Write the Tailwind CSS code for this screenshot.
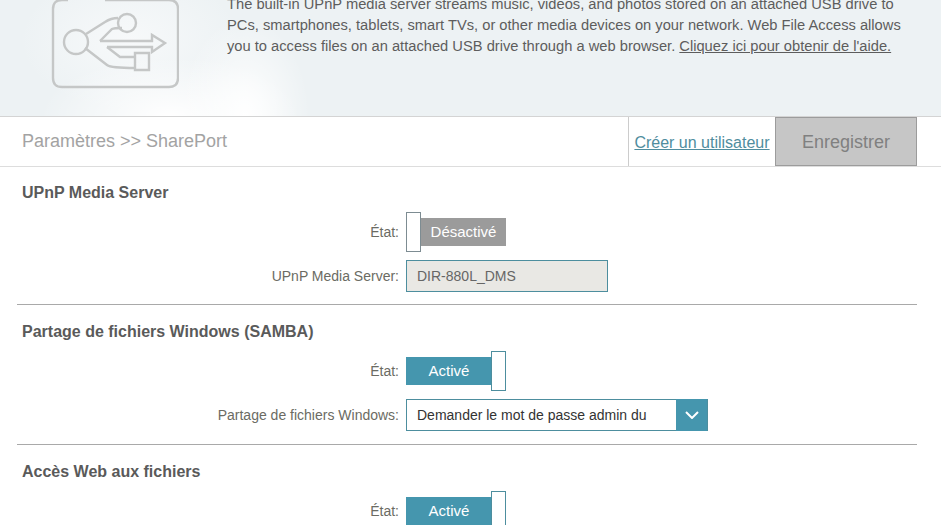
<!DOCTYPE html>
<html>
<head>
<meta charset="utf-8">
<script src="https://cdn.jsdelivr.net/npm/@tailwindcss/browser@4"></script>
</head>
<body class="h-[525px] w-[941px] overflow-hidden bg-white font-['Liberation_Sans',Arial,sans-serif]">

<!-- top banner -->
<div class="flex h-[117px] overflow-hidden border-b border-[#d4d4d4] bg-[#edf2f4] bg-[radial-gradient(ellipse_65px_100px_at_245px_117px,#ffffff_0%,#ffffff00_100%),radial-gradient(ellipse_130px_60px_at_170px_117px,#ffffff_0%,#ffffff00_100%),radial-gradient(ellipse_110px_70px_at_130px_40px,#f7f9fa_0%,#f7f9fa00_100%)]">
  <div class="ml-[51px] w-[128px] shrink-0">
    <svg width="128" height="90" viewBox="0 0 128 90" fill="none" stroke="#c5c7c7" stroke-width="2.4">
      <path d="M54 0H118Q127 0 127 9V78Q127 87 118 87H11Q2 87 2 78V9Q2 0 11 0H17"/>
      <circle cx="25" cy="42" r="12"/>
      <circle cx="76" cy="23" r="9"/>
      <path d="M35 34L54 22Q60 18 67 18"/>
      <path d="M49 41L61 29Q63 28 71 28"/>
      <path d="M49 41H101V35L114 43L101 52V47H56"/>
      <path d="M34 48L56 65Q60 68 84 68"/>
      <path d="M56 47L69 57H84"/>
      <path d="M84 53H98V70H84Z"/>
    </svg>
  </div>
  <p class="ml-[48px] mt-[-6px] w-[690px] text-[14.7px] leading-[21px] text-[#5d5d5d]">
    The built-in UPnP media server streams music, videos, and photos stored on an attached USB drive to
    PCs, smartphones, tablets, smart TVs, or other media devices on your network. Web File Access allows
    you to access files on an attached USB drive through a web browser. <u>Cliquez ici pour obtenir de l'aide.</u>
  </p>
</div>

<!-- title bar -->
<div class="flex h-[50px] items-center border-b border-[#dddddd] pl-[22px] pr-[24px]">
  <div class="flex-1 text-[18px] text-[#a3a3a3]">Paramètres &gt;&gt; SharePort</div>
  <div class="flex h-[49px] w-[147px] items-center justify-center border-l border-[#cccccc] pt-[2px] text-[16px] text-[#4f8d9e] underline">Créer un utilisateur</div>
  <div class="flex h-[49px] w-[142px] items-center justify-center border border-[#9c9c9c] bg-[#c6c6c6] pt-[2px] text-[18px] text-[#808080]">Enregistrer</div>
</div>

<!-- UPnP -->
<div class="mx-[17px] h-[138px] w-[900px] border-b border-[#a9a9a9]">
  <h2 class="pl-[5px] pt-[17px] text-[16px] font-bold leading-[17px] text-[#5a5a5a]">UPnP Media Server</h2>
  <div class="mt-[11px] flex h-[40px] items-center">
    <span class="w-[382px] text-right text-[14px] text-[#6b6b63]">État:</span>
    <div class="ml-[7px] flex h-[40px] items-center">
      <div class="h-[40px] w-[15px] border border-[#7d8c92] bg-white"></div>
      <div class="flex h-[28px] w-[85px] items-center justify-center bg-[#9b9b9b] text-[15px] text-white">Désactivé</div>
    </div>
  </div>
  <div class="mt-[8px] flex h-[32px] items-center">
    <span class="w-[382px] text-right text-[14px] text-[#6b6b63]">UPnP Media Server:</span>
    <div class="ml-[7px] flex h-[32px] w-[202px] items-center border border-[#4d8e9e] bg-[#e9e8e4] pl-[10px] text-[14px] text-[#666666]">DIR-880L_DMS</div>
  </div>
</div>

<!-- SAMBA -->
<div class="mx-[17px] h-[140px] w-[900px] border-b border-[#a9a9a9]">
  <h2 class="pl-[5px] pt-[18px] text-[16px] font-bold leading-[17px] text-[#5a5a5a]">Partage de fichiers Windows (SAMBA)</h2>
  <div class="mt-[11px] flex h-[40px] items-center">
    <span class="w-[382px] text-right text-[14px] text-[#6b6b63]">État:</span>
    <div class="ml-[7px] flex h-[40px] items-center">
      <div class="flex h-[28px] w-[86px] items-center justify-center bg-[#4596ae] text-[15px] text-white">Activé</div>
      <div class="ml-[-1px] h-[40px] w-[15px] border border-[#4d8e9e] bg-white"></div>
    </div>
  </div>
  <div class="mt-[8px] flex h-[32px] items-center">
    <span class="w-[382px] text-right text-[14px] text-[#6b6b63]">Partage de fichiers Windows:</span>
    <div class="ml-[7px] flex h-[32px] w-[302px] items-center justify-between border border-[#4d8e9e] bg-white pl-[10px] text-[14px] text-[#333333]">
      <span>Demander le mot de passe admin du</span>
      <div class="flex h-[32px] w-[31px] items-center justify-center bg-[#4596ae]">
        <svg width="14" height="8" viewBox="0 0 14 8" fill="none" stroke="#ffffff" stroke-width="2"><path d="M1 1L7 7L13 1"/></svg>
      </div>
    </div>
  </div>
</div>

<!-- web access -->
<div class="mx-[17px] w-[900px]">
  <h2 class="pl-[5px] pt-[18px] text-[16px] font-bold leading-[17px] text-[#5a5a5a]">Accès Web aux fichiers</h2>
  <div class="mt-[11px] flex h-[40px] items-center">
    <span class="w-[382px] text-right text-[14px] text-[#6b6b63]">État:</span>
    <div class="ml-[7px] flex h-[40px] items-center">
      <div class="flex h-[28px] w-[86px] items-center justify-center bg-[#4596ae] text-[15px] text-white">Activé</div>
      <div class="ml-[-1px] h-[40px] w-[15px] border border-[#4d8e9e] bg-white"></div>
    </div>
  </div>
</div>

</body>
</html>
